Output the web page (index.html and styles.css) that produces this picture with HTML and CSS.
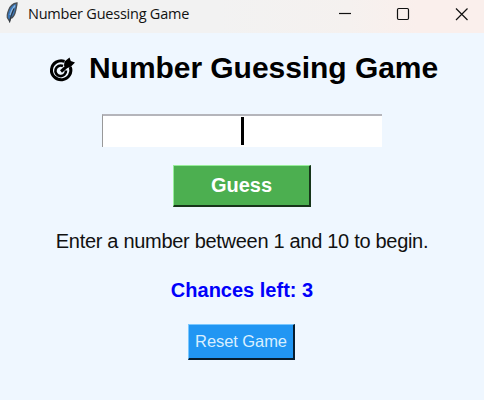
FILE: index.html
```html
<!DOCTYPE html>
<html lang="en">
<head>
<meta charset="utf-8">
<title>Number Guessing Game</title>
<link rel="stylesheet" href="styles.css">
</head>
<body>
<header class="titlebar">
  <svg class="feather" width="14" height="22" viewBox="0 0 14 22">
    <path d="M12 1C8.500 1.500 5 4 3.500 8.500C2.200 12 1.800 15 2.800 16.500L4.500 19L5.500 16.500C8.500 15.500 10 12 10.800 8C11.300 5 12 3 12 1Z" fill="#3976b8" stroke="#4a5056" stroke-width="1.300"/>
    <path d="M10 3.500C7.500 6.500 6 9 5 13" fill="none" stroke="#8db8e2" stroke-width="1.300"/>
    <path d="M9 6.500C7 11 5.500 14 4.500 20.500" fill="none" stroke="#30353b" stroke-width="1.100"/>
  </svg>
  <span class="caption">Number Guessing Game</span>
  <svg class="controls" width="132" height="16" viewBox="0 0 132 16" fill="none" stroke="#111" stroke-width="1.200">
    <path d="M0 7.500H12"/>
    <rect x="58.500" y="2.500" width="11" height="11" rx="1.200"/>
    <path d="M117 2.500L128.500 14M128.500 2.500L117 14"/>
  </svg>
</header>
<main class="game">
  <div class="heading">
    <svg class="target" width="28" height="26" viewBox="0 0 28 26" fill="none" stroke="#000">
      <path d="M15.500 4.300A9.700 9.500 0 1 0 21.300 10" stroke-width="3"/>
      <path d="M14 9A5.300 5.300 0 1 0 17 13.500" stroke-width="2.600"/>
      <path d="M12 14.500L20 7.500" stroke-width="3"/>
      <path d="M15 8.500L15.500 4.500L20.500 .5L21.800 4L26 5.500L21.500 10L17.500 11Z" fill="#000" stroke="none"/>
    </svg>
    <h1>Number Guessing Game</h1>
  </div>
  <div class="entry"><span class="caret"></span></div>
  <button class="btn guess"><span>Guess</span></button>
  <p class="prompt">Enter a number between 1 and 10 to begin.</p>
  <p class="chances">Chances left: 3</p>
  <button class="btn reset"><span>Reset Game</span></button>
</main>
</body>
</html>
```
FILE: styles.css
```css
* { box-sizing: border-box; }
body {
  margin: 0;
  height: 400px;
  overflow: hidden;
  background: #eff7ff;
  font-family: "Liberation Sans", Arial, sans-serif;
  color: #111;
}
.titlebar {
  height: 33px;
  display: flex;
  align-items: flex-start;
  background: linear-gradient(90deg, #f2f2f2 0 45%, #f5f1ef 72%, #faefec 86%);
}
.feather { margin: 2px 0 0 5px; }
.caption {
  margin: 4px 0 0 9px;
  font: 14.500px/20px "Open Sans", sans-serif;
  letter-spacing: -.23px;
  white-space: nowrap;
}
.controls { margin: 6px 13px 0 auto; }
.game {
  display: flex;
  flex-direction: column;
  align-items: center;
}
.heading {
  width: 100%;
  height: 81px;
  padding: 17px 0 0 49px;
  display: flex;
}
.target { margin-top: 7px; }
h1 {
  margin: 0 0 0 12px;
  font-size: 30px;
  line-height: 36px;
  letter-spacing: -.05px;
  color: #000;
  white-space: nowrap;
}
.entry {
  width: 280px;
  height: 33px;
  border-top: 2px solid #b5b5bb;
  border-left: 1px solid #999;
  background: #fff;
  display: flex;
  justify-content: center;
}
.caret { width: 3px; height: 28px; margin: 1px 1px 0 0; background: #000; }
.btn {
  padding: 0;
  border-style: solid;
  border-width: 1px 2px 2px 1px;
  border-radius: 0;
  font-family: inherit;
  white-space: nowrap;
}
.guess {
  width: 138px;
  height: 42px;
  margin-top: 18px;
  background: #4caf50;
  border-color: #98ee9c #17351a #17351a #98ee9c;
  color: #fff;
  font-size: 20px;
  font-weight: bold;
}
.reset {
  width: 107px;
  height: 36px;
  margin: 22px 1px 0 0;
  background: #2196f3;
  border-color: #7ac8ff #071d2e #071d2e #7ac8ff;
  color: #d9efff;
  font-size: 16.500px;
  letter-spacing: -.08px;
}
p { margin: 0; font-size: 20px; line-height: 24px; white-space: nowrap; }
.prompt { margin-top: 22px; letter-spacing: -.3px; }
.chances { margin-top: 25px; color: #0000fa; font-weight: bold; }
```
